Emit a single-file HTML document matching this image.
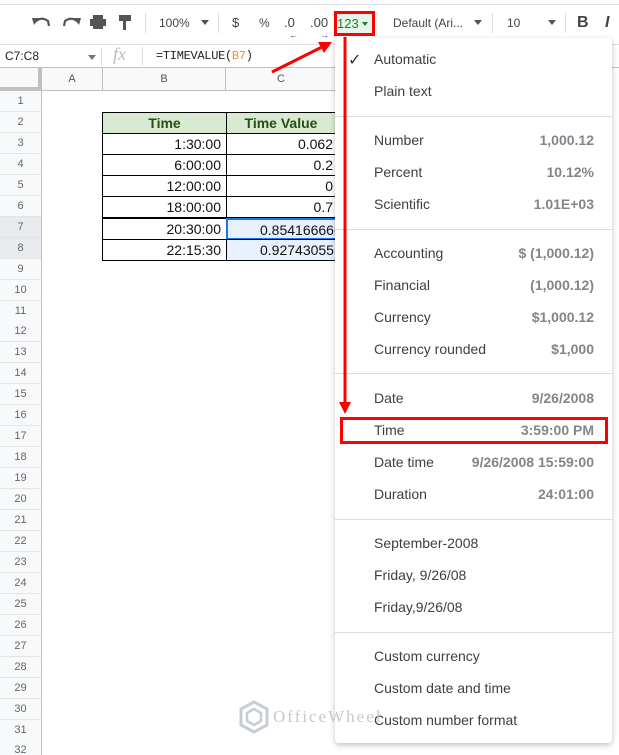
<!DOCTYPE html>
<html><head><meta charset="utf-8"><style>
*{margin:0;padding:0;box-sizing:border-box}
html,body{width:619px;height:755px;overflow:hidden}
body{background:#fff;font-family:"Liberation Sans",Arial,sans-serif;position:relative}
.a{position:absolute}
.tb{color:#444;font-size:13px}
.rh{position:absolute;left:0;width:42px;height:21px;background:#f8f9fa;border-bottom:1px solid #e2e3e3;border-right:1px solid #c0c0c0;color:#666;font-size:11px;text-align:center;line-height:21px}
.cell{position:absolute;border:1px solid #000;font-size:14px;color:#111;text-align:right;padding-right:5px;line-height:20px;height:22px}
.mi{position:absolute;left:374px;font-size:14px;color:#3c4043}
.mv{position:absolute;right:25px;font-size:14px;color:#80868b;font-weight:bold;text-align:right}
.sep{position:absolute;left:335px;width:277px;height:1px;background:#dadce0}
</style></head><body>
<div class="a" style="left:0;top:4px;width:619px;height:1px;background:#e0e0e0"></div>
<svg class="a" style="left:30px;top:13px" width="110" height="20">
<path d="M5 9 Q11 3 18 8 L19 13" stroke="#555" stroke-width="2.2" fill="none"/><polygon points="2,5 9,5 4,12" fill="#555"/>
<path d="M48 9 Q42 3 35 8 L34 13" stroke="#555" stroke-width="2.2" fill="none"/><polygon points="51,5 44,5 49,12" fill="#555"/>
<rect x="60" y="6" width="16" height="7" fill="#555"/><rect x="63" y="2" width="10" height="4" fill="#555"/><rect x="63" y="11" width="10" height="5" fill="#555"/>
<rect x="89" y="2" width="12" height="6" fill="#555"/><rect x="93" y="8" width="3" height="9" fill="#555"/>
</svg>
<div class="a" style="left:145px;top:13px;width:1px;height:20px;background:#ddd"></div>
<div class="a tb" style="left:159px;top:16px;font-size:12px">100%</div>
<div class="a" style="left:201px;top:20px;border:4px solid transparent;border-top:5px solid #555"></div>
<div class="a" style="left:218px;top:13px;width:1px;height:20px;background:#ddd"></div>
<div class="a tb" style="left:232px;top:15px;font-size:13px">$</div>
<div class="a tb" style="left:259px;top:16px;font-size:12px">%</div>
<div class="a tb" style="left:284px;top:15px">.0</div>
<div class="a tb" style="left:310px;top:15px">.00</div>
<div class="a" style="left:289px;top:30px;font-size:9px;color:#444">←</div>
<div class="a" style="left:320px;top:30px;font-size:9px;color:#444">→</div>
<div class="a" style="left:334px;top:11px;width:41px;height:25px;background:#e6f4ea;border:3px solid #f00"></div>
<div class="a" style="left:337px;top:16px;font-size:13px;color:#188038">123</div>
<div class="a" style="left:362px;top:22px;border:3px solid transparent;border-top:4px solid #188038"></div>
<div class="a tb" style="left:393px;top:16px;font-size:12px">Default (Ari...</div>
<div class="a" style="left:474px;top:20px;border:4px solid transparent;border-top:5px solid #555"></div>
<div class="a" style="left:492px;top:13px;width:1px;height:20px;background:#ddd"></div>
<div class="a tb" style="left:507px;top:16px;font-size:12px">10</div>
<div class="a" style="left:548px;top:20px;border:4px solid transparent;border-top:5px solid #555"></div>
<div class="a" style="left:565px;top:13px;width:1px;height:20px;background:#ddd"></div>
<div class="a" style="left:577px;top:14px;font-size:16px;font-weight:bold;color:#444">B</div>
<div class="a" style="left:605px;top:14px;font-size:16px;font-style:italic;font-weight:bold;color:#444">I</div>
<div class="a" style="left:0;top:44px;width:619px;height:24px;border-top:1px solid #e0e0e0;border-bottom:1px solid #c0c0c0"></div>
<div class="a" style="left:5px;top:49px;font-size:12px;color:#222">C7:C8</div>
<div class="a" style="left:88px;top:55px;border:4px solid transparent;border-top:5px solid #777"></div>
<div class="a" style="left:101px;top:47px;width:1px;height:18px;background:#ddd"></div>
<div class="a" style="left:113px;top:44px;font-size:18px;font-style:italic;color:#bbb;font-family:'Liberation Serif',serif">fx</div>
<div class="a" style="left:142px;top:47px;width:1px;height:18px;background:#ddd"></div>
<div class="a" style="left:156px;top:49px;font-size:12px;color:#222;font-family:'Liberation Mono',monospace;letter-spacing:-0.3px">=TIMEVALUE(<span style="color:#f28b30">B7</span>)</div>
<div class="a" style="left:0;top:68px;width:42px;height:23px;background:#f8f9fa;border-right:4px solid #c0c0c0;border-bottom:4px solid #c0c0c0"></div>
<div class="a" style="left:42px;top:68px;width:300px;height:23px;background:#f8f9fa;border-bottom:1px solid #c0c0c0;font-size:11px;color:#555;line-height:22px">
<span class="a" style="left:0;width:61px;text-align:center;border-right:1px solid #c0c0c0;height:22px">A</span>
<span class="a" style="left:61px;width:123px;text-align:center;border-right:1px solid #c0c0c0;height:22px">B</span>
<span class="a" style="left:184px;width:110px;text-align:center">C</span></div>
<div id="rows"></div>
<script>
let h='';for(let i=1;i<=32;i++){let t=91+(i-1)*20.95;h+=`<div class="rh" style="top:${t}px;${i==7||i==8?'background:#e8eaed;':''}">${i}</div>`;}
document.getElementById('rows').outerHTML=h;
</script>
<div class="cell" style="left:102px;top:112px;width:125px;background:#d9ead3;color:#274e13;font-weight:bold;text-align:center;padding:0;font-size:14px">Time</div>
<div class="cell" style="left:226px;top:112px;width:120px;background:#d9ead3;color:#274e13;font-weight:bold;text-align:center;padding:0 10px 0 0;font-size:14px">Time Value</div>
<div class="cell" style="left:102px;top:133px;width:125px">1:30:00</div><div class="cell" style="left:226px;top:133px;width:120px;padding-right:12px">0.062</div>
<div class="cell" style="left:102px;top:154px;width:125px">6:00:00</div><div class="cell" style="left:226px;top:154px;width:120px;padding-right:12px">0.2</div>
<div class="cell" style="left:102px;top:175px;width:125px">12:00:00</div><div class="cell" style="left:226px;top:175px;width:120px;padding-right:12px">0</div>
<div class="cell" style="left:102px;top:196px;width:125px">18:00:00</div><div class="cell" style="left:226px;top:196px;width:120px;padding-right:12px">0.7</div>
<div class="cell" style="left:102px;top:218px;width:125px">20:30:00</div><div class="cell" style="left:226px;top:218px;width:120px;background:#e8f0fe;border:2px solid #1a73e8;text-align:left;padding-left:32px">0.854166666</div>
<div class="cell" style="left:102px;top:239px;width:125px">22:15:30</div><div class="cell" style="left:226px;top:239px;width:120px;background:#e8f0fe;text-align:left;padding-left:33px">0.927430555</div>
<div class="a" style="left:335px;top:38px;width:277px;height:705px;background:#fff;border-radius:4px;box-shadow:0 2px 6px rgba(0,0,0,.25)"></div>
<div class="a" style="left:348px;top:50px;font-size:16px;color:#333">✓</div>
<div class="mi" style="top:51px">Automatic</div>
<div class="mi" style="top:83px">Plain text</div>
<div class="sep" style="top:116px"></div>
<div class="mi" style="top:132px">Number</div><div class="mv" style="top:132px">1,000.12</div>
<div class="mi" style="top:164px">Percent</div><div class="mv" style="top:164px">10.12%</div>
<div class="mi" style="top:196px">Scientific</div><div class="mv" style="top:196px">1.01E+03</div>
<div class="sep" style="top:229px"></div>
<div class="mi" style="top:245px">Accounting</div><div class="mv" style="top:245px">$ (1,000.12)</div>
<div class="mi" style="top:277px">Financial</div><div class="mv" style="top:277px">(1,000.12)</div>
<div class="mi" style="top:309px">Currency</div><div class="mv" style="top:309px">$1,000.12</div>
<div class="mi" style="top:341px">Currency rounded</div><div class="mv" style="top:341px">$1,000</div>
<div class="sep" style="top:373px"></div>
<div class="mi" style="top:390px">Date</div><div class="mv" style="top:390px">9/26/2008</div>
<div class="mi" style="top:422px">Time</div><div class="mv" style="top:422px">3:59:00 PM</div>
<div class="mi" style="top:454px">Date time</div><div class="mv" style="top:454px">9/26/2008 15:59:00</div>
<div class="mi" style="top:486px">Duration</div><div class="mv" style="top:486px">24:01:00</div>
<div class="sep" style="top:519px"></div>
<div class="mi" style="top:535px">September-2008</div>
<div class="mi" style="top:567px">Friday, 9/26/08</div>
<div class="mi" style="top:599px">Friday,9/26/08</div>
<div class="sep" style="top:632px"></div>
<div class="mi" style="top:648px">Custom currency</div>
<div class="mi" style="top:680px">Custom date and time</div>
<div class="mi" style="top:712px">Custom number format</div>
<div class="a" style="left:340px;top:417px;width:268px;height:27px;border:3px solid #f00"></div>
<svg class="a" style="left:238px;top:700px" width="32" height="34"><polygon points="16,2 29,9 29,25 16,32 3,25 3,9" fill="none" stroke="#c8ccd4" stroke-width="3"/><polygon points="16,9 23,13 23,21 16,25 9,21 9,13" fill="none" stroke="#c8ccd4" stroke-width="2.5"/></svg>
<div class="a" style="left:273px;top:707px;font-size:17px;color:#c4c8d0;letter-spacing:2px;font-family:'Liberation Serif',serif">OfficeWheel</div>
<svg class="a" style="left:0;top:0" width="619" height="755">
<line x1="272" y1="72" x2="322" y2="47" stroke="#f00" stroke-width="3"/>
<polygon points="332,42 318,42 324,53" fill="#f00"/>
<line x1="345" y1="37" x2="345" y2="404" stroke="#f00" stroke-width="3"/>
<polygon points="339,402 351,402 345,414" fill="#f00"/>
</svg>
</body></html>
